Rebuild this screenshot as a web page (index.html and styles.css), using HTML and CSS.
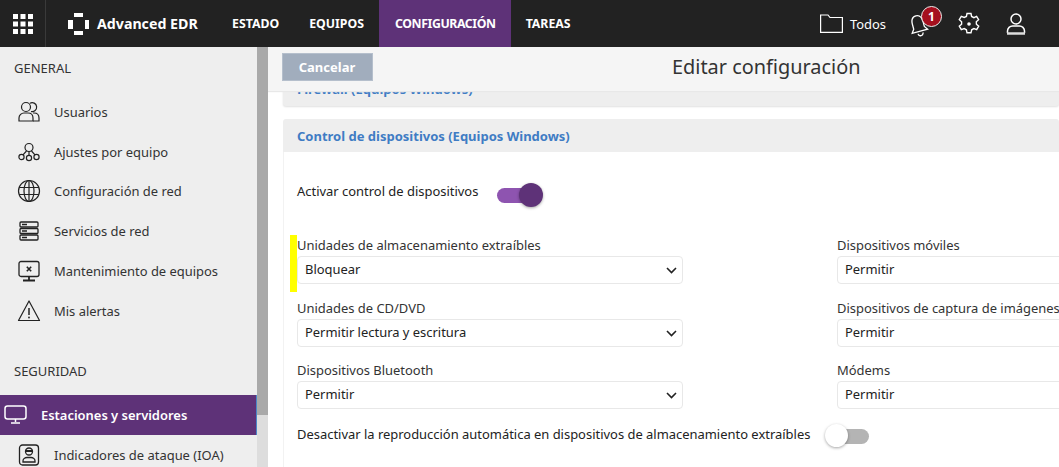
FILE: index.html
```html
<!DOCTYPE html>
<html lang="es">
<head>
<meta charset="utf-8">
<title>Editar configuración</title>
<link rel="stylesheet" href="styles.css">
</head>
<body>
<header class="topbar">
  <div class="apps">
    <svg width="20" height="20" viewBox="0 0 20 20" fill="#fff"><rect x="0" y="0" width="5" height="5"/><rect x="7.500" y="0" width="5" height="5"/><rect x="15" y="0" width="5" height="5"/><rect x="0" y="7.500" width="5" height="5"/><rect x="7.500" y="7.500" width="5" height="5"/><rect x="15" y="7.500" width="5" height="5"/><rect x="0" y="15" width="5" height="5"/><rect x="7.500" y="15" width="5" height="5"/><rect x="15" y="15" width="5" height="5"/></svg>
  </div>
  <div class="brand">
    <svg width="21" height="22" viewBox="0 0 21 22" fill="#fff"><rect x="6" y="0" width="9" height="4"/><rect x="6" y="18" width="9" height="4"/><rect x="0" y="7" width="5" height="9"/><rect x="17" y="7" width="4" height="9"/></svg>
    <span>Advanced EDR</span>
  </div>
  <nav class="mainnav">
    <a class="navitem">ESTADO</a>
    <a class="navitem">EQUIPOS</a>
    <a class="navitem active">CONFIGURACIÓN</a>
    <a class="navitem">TAREAS</a>
  </nav>
  <div class="tools">
    <div class="folder">
      <svg width="23" height="19" viewBox="0 0 23 19" fill="none" stroke="#fff" stroke-width="1.200"><path d="M.6 18.400V1h7.400l2 2.500h12.400v14.900z"/></svg>
      <span>Todos</span>
    </div>
    <div class="bell">
      <svg width="22" height="24" viewBox="0 0 22 24" fill="none" stroke="#fff" stroke-width="1.300"><g transform="rotate(-15 11 11)"><path d="M11 2.500C7 2.500 5.500 6 5.500 10v5L3 18.500h16L16.500 15v-5C16.500 6 15 2.500 11 2.500z"/><path d="M8.500 20.500a2.500 2.500 0 0 0 5 0"/></g></svg>
      <span class="badge">1</span>
    </div>
    <svg class="gear" width="24" height="24" viewBox="0 0 24 24" fill="none" stroke="#fff" stroke-width="1.400"><path d="M10 1.500h4l.6 3 2.300 1.100 2.700-1.300 2 3.400-2.300 2 .1 2.500 2.300 2-2 3.400-2.800-1-2.200 1.200-.7 3h-4l-.6-3-2.200-1.200-2.900 1-2-3.400 2.300-2V9.700l-2.300-2 2-3.400 2.900 1.200L9.400 4.500z"/><circle cx="12" cy="12" r="1.800" fill="#fff" stroke="none"/></svg>
    <svg class="user" width="20" height="22" viewBox="0 0 20 22" fill="none" stroke="#fff" stroke-width="1.500"><circle cx="10" cy="6" r="5"/><path d="M1.500 20v-2c0-3 2.500-5 5-5h7c2.500 0 5 2 5 5v2"/><path d="M1 20.500h18" stroke-width="2.500" stroke="#ddd"/></svg>
  </div>
</header>
<div class="page">
  <aside class="sidebar">
    <div class="sidescroll">
      <h2 class="sidehead">GENERAL</h2>
      <ul class="sidelist">
        <li class="sideitem"><svg class="ico" width="24" height="24" viewBox="0 0 24 24" fill="none" stroke="#222" stroke-width="1.200"><circle cx="9" cy="7" r="4.500"/><path d="M13 3.200a4.500 4.500 0 1 1 1 8.300"/><path d="M2 21v-3c0-3 2.500-5 5-5h4c3 0 5 2 5 5v3z"/><path d="M16 13h1c3 0 5 2 5 5v3h-6"/></svg>Usuarios</li>
        <li class="sideitem"><svg class="ico" width="24" height="24" viewBox="0 0 24 24" fill="none" stroke="#222" stroke-width="1.200"><circle cx="12" cy="7.500" r="4"/><circle cx="4.500" cy="17" r="2.600"/><circle cx="12" cy="18" r="2.600"/><circle cx="19.500" cy="17" r="2.600"/><path d="M9.500 11l-3.500 3.800M12 11.500v4M14.500 11l3.500 3.800"/></svg>Ajustes por equipo</li>
        <li class="sideitem"><svg class="ico" width="24" height="24" viewBox="0 0 24 24" fill="none" stroke="#222" stroke-width="1.200"><circle cx="12" cy="12" r="10.500"/><ellipse cx="12" cy="12" rx="5" ry="10.500"/><path d="M2 8.500h20M2 15.500h20M12 1.500v21"/></svg>Configuración de red</li>
        <li class="sideitem"><svg class="ico" width="24" height="24" viewBox="0 0 24 24" fill="none" stroke="#222" stroke-width="1.300"><rect x="3" y="3" width="18" height="5" rx="1"/><rect x="3" y="9.500" width="18" height="5" rx="1"/><rect x="3" y="16" width="18" height="5" rx="1"/><path d="M5 5.500h5M5 12h5M5 18.500h5"/></svg>Servicios de red</li>
        <li class="sideitem"><svg class="ico" width="24" height="24" viewBox="0 0 24 24" fill="none" stroke="#222" stroke-width="1.300"><rect x="2" y="2.500" width="20" height="15" rx="2"/><path d="M9.800 7.800l4.400 4.400M14.200 7.800l-4.400 4.400" stroke-width="1.600"/><path d="M12 17.500v3M6 21.500h12" stroke-width="1.800"/></svg>Mantenimiento de equipos</li>
        <li class="sideitem"><svg class="ico" width="24" height="24" viewBox="0 0 24 24" fill="none" stroke="#222" stroke-width="1.200"><path d="M12 2L1.500 21.500h21z" stroke-linejoin="round"/><path d="M12 9v7" stroke-width="1.500"/><circle cx="12" cy="18.500" r=".9" fill="#222" stroke="none"/></svg>Mis alertas</li>
      </ul>
      <h2 class="sidehead second">SEGURIDAD</h2>
      <ul class="sidelist">
        <li class="sideitem selected"><svg class="ico-sel" width="24" height="20" viewBox="0 0 24 20" fill="none" stroke="#fff" stroke-width="1.500"><rect x="1" y="1" width="21" height="13" rx="2.500"/><path d="M11.500 14v3M7 18h9"/></svg>Estaciones y servidores</li>
        <li class="sideitem"><svg class="ico" width="24" height="24" viewBox="0 0 24 24" fill="none" stroke="#222" stroke-width="1.300"><rect x="2.500" y="2" width="19" height="20" rx="3"/><circle cx="12" cy="8.500" r="3.500"/><path d="M8.500 8h7" stroke-width="2"/><path d="M6 19v-1c0-2 2-3.500 4-3.500h4c2 0 4 1.500 4 3.500v1z"/></svg>Indicadores de ataque (IOA)</li>
      </ul>
    </div>
    <div class="scrollbar"><div class="thumb"></div></div>
  </aside>
  <main class="content">
    <div class="toolbar">
      <button class="cancel">Cancelar</button>
      <h1 class="title">Editar configuración</h1>
    </div>
    <section class="panel firewall">
      <div class="panelhead">Firewall (Equipos Windows)</div>
    </section>
    <section class="panel">
      <div class="panelhead">Control de dispositivos (Equipos Windows)</div>
      <div class="panelbody">
        <div class="switchrow main">
          <span>Activar control de dispositivos</span>
          <span class="switch on"><span class="knob"></span></span>
        </div>
        <div class="formgrid">
          <div class="field marked">
            <label class="lbl">Unidades de almacenamiento extraíbles</label>
            <div class="select">Bloquear<svg class="chev" width="11" height="7" viewBox="0 0 11 7" fill="none" stroke="#222" stroke-width="1.600"><path d="M1 1l4.500 4.500L10 1"/></svg></div>
          </div>
          <div class="field">
            <label class="lbl">Dispositivos móviles</label>
            <div class="select">Permitir</div>
          </div>
          <div class="field">
            <label class="lbl">Unidades de CD/DVD</label>
            <div class="select">Permitir lectura y escritura<svg class="chev" width="11" height="7" viewBox="0 0 11 7" fill="none" stroke="#222" stroke-width="1.600"><path d="M1 1l4.500 4.500L10 1"/></svg></div>
          </div>
          <div class="field">
            <label class="lbl">Dispositivos de captura de imágenes</label>
            <div class="select">Permitir</div>
          </div>
          <div class="field">
            <label class="lbl">Dispositivos Bluetooth</label>
            <div class="select">Permitir<svg class="chev" width="11" height="7" viewBox="0 0 11 7" fill="none" stroke="#222" stroke-width="1.600"><path d="M1 1l4.500 4.500L10 1"/></svg></div>
          </div>
          <div class="field">
            <label class="lbl">Módems</label>
            <div class="select">Permitir</div>
          </div>
        </div>
        <div class="switchrow last">
          <span>Desactivar la reproducción automática en dispositivos de almacenamiento extraíbles</span>
          <span class="switch off"><span class="knob"></span></span>
        </div>
      </div>
    </section>
  </main>
</div>
</body>
</html>
```
FILE: styles.css
```css
* { box-sizing: border-box; }
html, body { margin: 0; height: 467px; overflow: hidden; }
body { font-family: "Noto Sans", "Open Sans", sans-serif; font-size: 12.950px; color: #222; background: #fff; }
h1, h2, ul { margin: 0; padding: 0; }
ul { list-style: none; }

.topbar { height: 47px; background: #222; color: #fff; display: flex; align-items: stretch; }
.apps { width: 46px; flex: none; border-right: 1px solid #3a3a3a; display: flex; align-items: center; justify-content: center; }
.brand { display: flex; align-items: center; gap: 8px; padding-left: 22px; width: 171px; font-weight: 700; font-size: 14.200px; flex: none; }
.mainnav { display: flex; }
.navitem { display: flex; align-items: center; padding: 0 15px; font-weight: 700; font-size: 12.300px; }
.navitem.active { background: #5e3278; letter-spacing: -.4px; padding: 0 15px 0 16px; }
.tools { margin-left: auto; display: flex; align-items: center; padding-right: 33px; }
.folder { display: flex; align-items: center; gap: 7px; margin-right: 24px; }
.bell { position: relative; width: 22px; height: 26px; margin-right: 25px; }
.bell svg { position: absolute; left: -3px; top: 2px; }
.badge { position: absolute; left: 11px; top: -5px; width: 21px; height: 21px; border-radius: 50%; background: #a50f1e; border: 1px solid #eee; color: #fff; font-size: 12px; font-weight: 700; display: flex; align-items: center; justify-content: center; }
.gear { margin-right: 25px; }
.page { display: flex; height: 420px; }

.sidebar { width: 268px; flex: none; background: #eee; display: flex; overflow: hidden; }
.sidescroll { width: 257px; flex: none; }
.sidehead { font-size: 13px; font-weight: 400; color: #333; padding: 12px 0 0 14px; height: 45px; }
.sidehead.second { padding-top: 31px; height: 64px; }
.sideitem { height: 39.800px; display: flex; align-items: center; gap: 13px; padding-left: 17px; color: #333; }
.sideitem.selected { background: #5e3278; color: #fff; font-weight: 600; padding-left: 4px; gap: 13px; height: 40px; border-right: 1px solid #4a86c8; }
.ico { flex: none; width: 24px; height: 24px; }
.ico-sel { flex: none; }
.scrollbar { width: 11px; flex: none; background: #ddd; }
.thumb { height: 368px; background: #a9a9a9; }

.content { flex: 1; min-width: 0; overflow: hidden; background: #fff; }
.toolbar { position: relative; z-index: 2; height: 44px; background: #f5f5f5; padding: 6px 0 0 14px; display: flex; align-items: flex-start; box-shadow: 0 1px 1px #e8e8e8; }
.cancel { width: 91px; height: 28px; border: 1px solid #b5bfcc; background: #a1adbd; color: #fff; font-family: inherit; font-size: 13px; font-weight: 700; padding: 0 1px 0 0; }
.title { font-size: 19.900px; font-weight: 400; color: #333; margin-left: 299px; line-height: 28px; white-space: nowrap; }

.panel { margin-left: 15px; }
.panelhead { background: #eee; color: #3f7cc4; font-weight: 700; font-size: 13px; height: 33px; line-height: 34px; padding-left: 14px; white-space: nowrap; border-radius: 3px 3px 0 0; }
.firewall { margin-top: -20px; margin-bottom: 13px; }
.firewall .panelhead { height: 35px; line-height: 36px; box-shadow: 0 1px 2px #e0e0e0; border-radius: 0 0 3px 3px; }
.panelbody { padding: 0 0 50px 13px; border-left: 1px solid #f2f2f2; }

.switchrow { display: flex; align-items: flex-start; color: #222; line-height: 20px; }
.switchrow.main { padding-top: 29px; height: 83px; gap: 19px; }
.switchrow.last { margin-top: 15px; gap: 25px; }
.switch { position: relative; display: inline-block; width: 34px; height: 15px; border-radius: 8px; flex: none; }
.switch.on { background: #8e54b0; margin-top: 7px; }
.switch.off { background: #b4b4b4; margin-top: 5px; }
.knob { position: absolute; top: -5px; width: 24px; height: 24px; border-radius: 50%; box-shadow: 0 1px 3px rgba(0,0,0,.35); }
.on .knob { left: 22px; background: #5e3278; }
.off .knob { left: -10px; background: #fff; width: 23px; height: 23px; }

.formgrid { display: grid; grid-template-columns: 386px 386px; column-gap: 154px; row-gap: 13.500px; }
.field { position: relative; }
.lbl { display: block; height: 21px; line-height: 20px; white-space: nowrap; color: #333; }
.select { position: relative; height: 28px; border: 1px solid #e8e8e8; border-radius: 4px; background: #fff; line-height: 25px; padding-left: 7px; color: #222; }
.chev { position: absolute; right: 5px; top: 10px; }
.marked::before { content: ""; position: absolute; left: -7px; top: 0; width: 7px; height: 57px; background: #ffff00; }
```
